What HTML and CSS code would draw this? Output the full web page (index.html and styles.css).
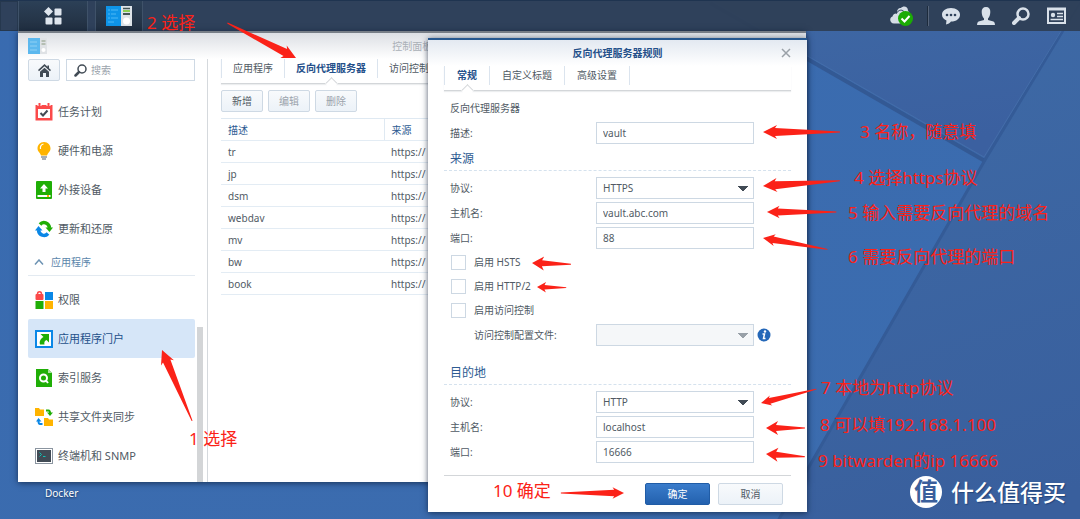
FILE: index.html
```html
<!DOCTYPE html>
<html lang="zh-CN">
<head>
  <meta charset="utf-8">
  <title>控制面板</title>
  <link rel="stylesheet" href="styles.css">
</head>
<body>
  <!-- 壁纸 -->
  <svg class="wallpaper" viewBox="0 0 1080 519" preserveAspectRatio="xMidYMid slice" aria-hidden="true">
    <defs>
      <linearGradient id="wall-left" x1="0" y1="0" x2="1" y2="1">
        <stop offset="0" stop-color="#396bb0"/>
        <stop offset="1" stop-color="#3c6cae"/>
      </linearGradient>
      <linearGradient id="wall-right" x1="0.5" y1="0" x2="0.7" y2="1">
        <stop offset="0" stop-color="#3e6aa6"/>
        <stop offset="1" stop-color="#395f9d"/>
      </linearGradient>
      <linearGradient id="wall-top" x1="0" y1="0" x2="0.3" y2="1">
        <stop offset="0" stop-color="#3e68a4"/>
        <stop offset="1" stop-color="#3b60a0"/>
      </linearGradient>
    </defs>
    <rect width="1080" height="519" fill="url(#wall-left)"/>
    <path d="M710 0H1082L985 158Z" fill="url(#wall-top)"/>
    <path d="M1082 0L985 158L806 470L778 519H1080V0Z" fill="url(#wall-right)"/>
    <path d="M710 3L985 161" stroke="#335994" stroke-width="4" fill="none"/>
    <path d="M1080 2L985 160L806 472L778 521" stroke="#345b97" stroke-width="3" fill="none"/>
    <path d="M710 0L984 157L1080 0" stroke="#446da9" stroke-width="1" fill="none"/>
  </svg>

  <!-- 任务栏 -->
  <header class="taskbar">
    <div class="task-slot"></div>
    <button class="task-btn task-menu" type="button" aria-label="主菜单">
      <svg width="18" height="18" viewBox="0 0 18 18" fill="#dfe6ee">
        <path d="M4.500 0L9 4.500L4.500 9L0 4.500Z"/>
        <rect x="10.500" y="1.500" width="7" height="7" rx="1"/>
        <rect x="1.500" y="10.500" width="7" height="7" rx="1"/>
        <rect x="10.500" y="10.500" width="7" height="7" rx="1"/>
      </svg>
    </button>
    <button class="task-btn task-app" type="button" aria-label="控制面板">
      <svg width="26" height="20" viewBox="0 0 26 20">
        <rect width="15" height="20" fill="#0e94e8"/>
        <rect x="15" width="11" height="20" fill="#dde3e8"/>
        <path d="M2 4h2M5 4h7M2 8h2M5 8h5M2 12h2M5 12h7M2 16h6" stroke="#4db8f5" stroke-width="1"/>
        <path d="M17 2.500h7" stroke="#455" stroke-width="1.500"/>
        <path d="M17 5h7" stroke="#6fc720" stroke-width="1.500"/>
        <path d="M17 8h7" stroke="#455" stroke-width="2"/>
        <circle cx="20.500" cy="15" r="3.500" fill="#fff"/>
      </svg>
    </button>
    <nav class="tray">
      <a href="#" aria-label="云同步">
        <svg width="24" height="20" viewBox="0 0 24 20">
          <path d="M4 17.500C-.5 17.500-1 11.500 2.500 10.500C3 8 5 7 7 7.500C7 4 11 3 12 5C14 3 17 4 17.500 8L20 17.500Z" fill="#d5dde6"/>
          <path d="M7 6.500C7 3 9 1.500 11 2C13-.5 18 0 18 4.500L20 8L15 7C13 4 10 4 7 6.500Z" fill="#d5dde6"/>
          <path d="M6.500 7.500C8 3.500 13 3 14.500 6.500" fill="none" stroke="#2f425b"/>
          <circle cx="15.500" cy="12.500" r="7.500" fill="#1bab05"/>
          <path d="M11.500 12.500L14.500 15.500L19.500 10" fill="none" stroke="#fff" stroke-width="2"/>
        </svg>
      </a>
      <span class="tray-divider"></span>
      <a href="#" aria-label="通知">
        <svg width="18" height="18" viewBox="0 0 18 18">
          <path d="M9 1C3.500 1 0 4 0 7.700C0 10.500 2 12.500 4.500 13.500L4 17.500C6 17 8 16 9 14.500C14.500 14.500 18 11.500 18 7.700C18 4 14.500 1 9 1Z" fill="#d9e1ea"/>
          <circle cx="5" cy="8" r="1.300" fill="#2f425b"/><circle cx="9" cy="8" r="1.300" fill="#2f425b"/><circle cx="13" cy="8" r="1.300" fill="#2f425b"/>
        </svg>
      </a>
      <a href="#" aria-label="用户">
        <svg width="18" height="18" viewBox="0 0 18 18" fill="#d9e1ea">
          <path d="M9 0C6 0 4.500 2 4.700 5C4.800 8 5.500 10 7 11.500V13L1.500 14.500Q0 15 0 18H18Q18 15 16.500 14.500L11 13V11.500C12.500 10 13.200 8 13.300 5C13.500 2 12 0 9 0Z"/>
        </svg>
      </a>
      <a href="#" aria-label="搜索">
        <svg width="18" height="18" viewBox="0 0 18 18" fill="none" stroke="#d9e1ea">
          <circle cx="11" cy="7" r="5.500" stroke-width="2.500"/>
          <path d="M7 11L2 16" stroke-width="4" stroke-linecap="round"/>
        </svg>
      </a>
      <a href="#" aria-label="小工具">
        <svg width="19" height="18" viewBox="0 0 19 18" fill="none" stroke="#d9e1ea">
          <path d="M1 2V16H18V2Z" stroke-width="2"/>
          <path d="M0 2H19" stroke-width="3"/>
          <circle cx="6" cy="8" r="2.200" fill="#d9e1ea" stroke="none"/>
          <path d="M10 6.500H16M10 9.500H16M3.500 12.500H16" stroke-width="1.500"/>
        </svg>
      </a>
    </nav>
  </header>

  <main class="desktop">
    <span class="desktop-label">Docker</span>

    <!-- 控制面板窗口 -->
    <section class="window panel">
      <div class="panel-title">
        <svg class="panel-icon" width="19" height="16" viewBox="0 0 19 16">
          <rect width="12" height="16" fill="#5cb8ee"/>
          <rect x="12" width="7" height="16" fill="#dfe2e5"/>
          <path d="M2 4h7M2 8h7M2 12h7" stroke="#8fd0f4"/>
          <path d="M13.500 3h4M13.500 6h4" stroke="#8a9a80"/>
          <circle cx="15.500" cy="12" r="2" fill="#fff"/>
        </svg>
        控制面板
      </div>
      <div class="panel-body">
        <aside class="sidebar">
          <div class="side-tools">
            <button class="btn btn-home" type="button" aria-label="首页">
              <svg width="13" height="13" viewBox="0 0 13 13" fill="#414b55">
                <path d="M6.500 0L0 6L1 7.200L6.500 2.300L12 7.200L13 6L11 4.200V1.500H9.500V2.800Z"/>
                <path d="M6.500 3.800L2 7.800V13H5V9H8V13H11V7.800Z"/>
              </svg>
            </button>
            <div class="search">
              <svg width="13" height="13" viewBox="0 0 13 13" fill="none" stroke="#414b55">
                <circle cx="8" cy="5" r="4" stroke-width="1.500"/>
                <path d="M5 8L1.500 11.500" stroke-width="2.500" stroke-linecap="round"/>
              </svg>
              <input type="text" placeholder="搜索" aria-label="搜索">
            </div>
          </div>
          <nav class="side-nav">
            <a href="#">
              <svg width="18" height="18" viewBox="0 0 18 18">
                <path d="M.5 2H17.500V17.500H.5Z" fill="#fb4a4a"/>
                <path d="M3 6H15V15H3Z" fill="#fff"/>
                <path d="M4.500 0V3M13.500 0V3" stroke="#fff" stroke-width="4"/>
                <path d="M4.500 0V3M13.500 0V3" stroke="#fb4a4a" stroke-width="2"/>
                <path d="M5.500 10L8 12.500L12.500 7.500" fill="none" stroke="#414b55" stroke-width="2"/>
              </svg>
              任务计划
            </a>
            <a href="#">
              <svg width="18" height="18" viewBox="0 0 18 18">
                <path d="M9 0C5 0 2.500 3 2.500 6.500C2.500 9.500 5 10.500 6 13.500H12C13 10.500 15.500 9.500 15.500 6.500C15.500 3 13 0 9 0Z" fill="#ffb400"/>
                <path d="M5.500 7C5 4 6.500 2.500 8.500 2" fill="none" stroke="#fff" stroke-width="1.200"/>
                <path d="M6 15H12M7 17H11" stroke="#8b95a0" stroke-width="1.500"/>
              </svg>
              硬件和电源
            </a>
            <a href="#">
              <svg width="18" height="18" viewBox="0 0 18 18">
                <rect x="1" width="16" height="18" rx="1" fill="#1fae06"/>
                <path d="M9 3L13 7.500H10.500V11H7.500V7.500H5Z" fill="#fff"/>
                <rect x="2.500" y="14" width="13" height="2" fill="#fff"/>
                <rect x="12" y="14" width="2" height="2" fill="#ffb400"/>
              </svg>
              外接设备
            </a>
            <a href="#">
              <svg width="18" height="18" viewBox="0 0 18 18">
                <path d="M5 4.500C8 1 14 2.500 14.500 8" fill="none" stroke="#1fae06" stroke-width="3.500"/>
                <path d="M10.500 7.500H18L14.500 12Z" fill="#1fae06"/>
                <path d="M13 13.500C10 17 4 15.500 3.500 10" fill="none" stroke="#0a87e6" stroke-width="3.500"/>
                <path d="M0 10.500H7.500L3.500 6Z" fill="#0a87e6"/>
              </svg>
              更新和还原
            </a>
            <h3 class="side-group">
              <svg width="10" height="6" viewBox="0 0 10 6" fill="none" stroke="#6d93b3" stroke-width="1.500"><path d="M1 5.500L5 1L9 5.500"/></svg>
              应用程序
            </h3>
            <a href="#">
              <svg width="18" height="18" viewBox="0 0 18 18">
                <path d="M2.500 4V3C2.500 0 6.500 0 6.500 3V4" fill="none" stroke="#fb4a4a" stroke-width="1.500"/>
                <rect x=".5" y="3" width="8" height="6" rx="1" fill="#fb4a4a"/>
                <rect x="10" y="1" width="8" height="8" fill="#0a87e6"/>
                <rect x=".5" y="10" width="8" height="8" fill="#1fae06"/>
                <rect x="10" y="10" width="8" height="8" fill="#ffb400"/>
              </svg>
              权限
            </a>
            <a href="#" class="selected">
              <svg width="18" height="18" viewBox="0 0 18 18">
                <rect x="1" y="1" width="16" height="16" fill="#fff" stroke="#0a87e6" stroke-width="2"/>
                <path d="M5.500 4H14V12.500L11.500 10C9.500 11 9 12 9.500 14.500H5C4 11 6 8.500 8.500 7Z" fill="#1fae06"/>
              </svg>
              应用程序门户
            </a>
            <a href="#">
              <svg width="18" height="18" viewBox="0 0 18 18">
                <path d="M1 0H13L17 4V18H1Z" fill="#1fae06"/>
                <path d="M13 0V4H17Z" fill="#a9e09f"/>
                <circle cx="8.500" cy="9" r="3.500" fill="none" stroke="#fff" stroke-width="2"/>
                <path d="M11 11.500L13 14" stroke="#fff" stroke-width="2"/>
              </svg>
              索引服务
            </a>
            <a href="#">
              <svg width="18" height="18" viewBox="0 0 18 18">
                <path d="M0 0H4L5 1.500H9V8H0ZM9 10H13L14 11.500H18V18H9Z" fill="#ffb400"/>
                <path d="M11 2.500H13.500Q15 2.500 15 5" fill="none" stroke="#1fae06" stroke-width="2"/>
                <path d="M12 4.500H18L15 8Z" fill="#1fae06"/>
                <path d="M7.500 16H5Q3.500 16 3.500 13" fill="none" stroke="#0a87e6" stroke-width="2"/>
                <path d="M1 13.500H6.500L3.500 10Z" fill="#0a87e6"/>
              </svg>
              共享文件夹同步
            </a>
            <a href="#">
              <svg width="18" height="18" viewBox="0 0 18 18">
                <rect x=".5" y="1.500" width="17" height="15" fill="#fff" stroke="#8b95a0"/>
                <rect x="2" y="3" width="14" height="12" fill="#414b55"/>
                <path d="M4.500 5.500L6.500 7.500L4.500 9.500M8 9.500H10.500" fill="none" stroke="#12c0b4"/>
              </svg>
              终端机和 SNMP
            </a>
          </nav>
          <div class="side-scroll"></div>
        </aside>

        <div class="content">
          <nav class="tabs">
            <a href="#">应用程序</a>
            <a href="#" class="active">反向代理服务器</a>
            <a href="#">访问控制</a>
          </nav>
          <div class="toolbar">
            <button class="btn" type="button">新增</button>
            <button class="btn" type="button" disabled>编辑</button>
            <button class="btn" type="button" disabled>删除</button>
          </div>
          <table class="rules">
            <thead>
              <tr><th>描述</th><th>来源</th></tr>
            </thead>
            <tbody>
              <tr><td>tr</td><td>https://</td></tr>
              <tr><td>jp</td><td>https://</td></tr>
              <tr><td>dsm</td><td>https://</td></tr>
              <tr><td>webdav</td><td>https://</td></tr>
              <tr><td>mv</td><td>https://</td></tr>
              <tr><td>bw</td><td>https://</td></tr>
              <tr><td>book</td><td>https://</td></tr>
            </tbody>
          </table>
        </div>
      </div>
    </section>

    <!-- 反向代理规则对话框 -->
    <form class="window dialog">
      <div class="dialog-title">
        <h2>反向代理服务器规则</h2>
        <button class="close" type="button" aria-label="关闭">
          <svg width="10" height="10" viewBox="0 0 10 10" stroke="#9aa1a8" stroke-width="1.500"><path d="M1 1L9 9M9 1L1 9"/></svg>
        </button>
      </div>
      <nav class="tabs">
        <a href="#" class="active">常规</a>
        <a href="#">自定义标题</a>
        <a href="#">高级设置</a>
      </nav>
      <div class="fields">
        <p class="caption">反向代理服务器</p>
        <div class="row">
          <label for="desc">描述:</label>
          <input id="desc" type="text" value="vault">
        </div>
        <h3>来源</h3>
        <div class="row">
          <label for="src-proto">协议:</label>
          <select id="src-proto"><option>HTTPS</option><option>HTTP</option></select>
        </div>
        <div class="row">
          <label for="src-host">主机名:</label>
          <input id="src-host" type="text" value="vault.abc.com">
        </div>
        <div class="row">
          <label for="src-port">端口:</label>
          <input id="src-port" type="text" value="88">
        </div>
        <div class="checks">
          <label><input type="checkbox" name="hsts">启用 HSTS</label>
          <label><input type="checkbox" name="http2">启用 HTTP/2</label>
          <label><input type="checkbox" name="access">启用访问控制</label>
        </div>
        <div class="row">
          <label for="profile" class="indent">访问控制配置文件:</label>
          <select id="profile" disabled><option></option></select>
          <svg class="info" width="14" height="14" viewBox="0 0 14 14">
            <circle cx="7" cy="7" r="6.500" fill="#2467b8"/>
            <circle cx="8" cy="3.500" r="1.200" fill="#fff"/>
            <path d="M5.500 6H7.500L6.500 10.500H8.500" fill="none" stroke="#fff" stroke-width="1.500"/>
          </svg>
        </div>
        <h3 class="spaced">目的地</h3>
        <div class="row">
          <label for="dst-proto">协议:</label>
          <select id="dst-proto"><option>HTTP</option><option>HTTPS</option></select>
        </div>
        <div class="row">
          <label for="dst-host">主机名:</label>
          <input id="dst-host" type="text" value="localhost">
        </div>
        <div class="row">
          <label for="dst-port">端口:</label>
          <input id="dst-port" type="text" value="16666">
        </div>
      </div>
      <footer class="dialog-footer">
        <button class="btn btn-primary" type="button">确定</button>
        <button class="btn" type="button">取消</button>
      </footer>
    </form>
  </main>

  <!-- 操作步骤标注 -->
  <svg class="notes" width="1080" height="519" viewBox="0 0 1080 519">
    <defs>
      <path id="arrow" d="M0 0L14 -7L12 -4L77 -.5V.5L12 4L14 7Z"/>
      <path id="arrow-short" d="M0 0L12 -7L10 -3L39 -.5V.5L10 3L12 7Z"/>
    </defs>
    <g class="arrows">
      <use href="#arrow" transform="translate(162 350) rotate(67)"/>
      <use href="#arrow" transform="translate(296 58) rotate(207)"/>
      <use href="#arrow" transform="translate(763 132)"/>
      <use href="#arrow" transform="translate(763 186) rotate(-4)"/>
      <use href="#arrow" transform="translate(767 212) scale(.9)"/>
      <use href="#arrow" transform="translate(763 238) rotate(10) scale(.85)"/>
      <use href="#arrow-short" transform="translate(532 263) rotate(2)"/>
      <use href="#arrow-short" transform="translate(537 287) rotate(1) scale(.75)"/>
      <use href="#arrow" transform="translate(761 403) rotate(-14) scale(.74)"/>
      <use href="#arrow-short" transform="translate(766 428)"/>
      <use href="#arrow-short" transform="translate(766 454) rotate(4)"/>
      <use href="#arrow" transform="translate(624 493) rotate(180) scale(.82)"/>
    </g>
    <g class="steps">
      <text x="189" y="445">1 选择</text>
      <text x="147" y="29">2 选择</text>
      <text x="860" y="138">3 名称，随意填</text>
      <text x="854" y="184">4 选择https协议</text>
      <text x="848" y="219">5 输入需要反向代理的域名</text>
      <text x="848" y="263">6 需要反向代理的端口</text>
      <text x="821" y="394">7 本地为http协议</text>
      <text x="820" y="431">8 可以填192.168.1.100</text>
      <text x="818" y="467">9 bitwarden的ip 16666</text>
      <text x="493" y="497">10 确定</text>
    </g>
    <g class="brand">
      <circle cx="926" cy="492" r="16"/>
      <text class="brand-mark" x="926" y="500">值</text>
      <text class="brand-name" x="951" y="501">什么值得买</text>
    </g>
  </svg>
</body>
</html>
```

FILE: styles.css
```css
* {
  box-sizing: border-box;
}
body {
  margin: 0;
  min-height: 100vh;
  position: relative;
  overflow: hidden;
  display: flex;
  flex-direction: column;
  background-color: #3b6bae;
  color: #505a64;
  font-family: "Noto Sans", "Noto Sans CJK SC", sans-serif;
  font-size: 10px;
  line-height: 16px;
}
a {
  color: inherit;
  text-decoration: none;
}
h2, h3, p {
  margin: 0;
}
button, input, select {
  font: inherit;
  color: inherit;
}
svg {
  display: block;
  flex-shrink: 0;
}
.wallpaper {
  position: absolute;
  width: 100%;
  height: 100%;
}

/* 任务栏 */
.taskbar {
  position: relative;
  display: flex;
  height: 31px;
  background: rgba(46, 63, 86, 0.95);
  border-top: 1px solid #1f3450;
}
.task-slot {
  width: 18px;
  border: 1px solid #26384e;
}
.task-btn {
  display: flex;
  align-items: center;
  justify-content: center;
  padding: 0;
  border: 1px solid #3f5269;
  border-width: 0 1px;
  background: linear-gradient(#2c4057, #212f40);
}
.task-menu {
  width: 70px;
}
.task-app {
  width: 48px;
  margin-left: 7px;
}
.tray {
  display: flex;
  align-items: center;
  gap: 17px;
  margin-left: auto;
  padding-right: 14px;
}
.tray-divider {
  width: 2px;
  height: 20px;
  margin: 0 -4px;
  border-left: 1px solid #1d2b3c;
  border-right: 1px solid #566479;
}

/* 桌面 */
.desktop {
  position: relative;
  flex: 1;
}
.desktop-label {
  position: absolute;
  left: 45px;
  top: 454px;
  color: #fff;
  text-shadow: 0 1px 2px #14305a;
}
.window {
  position: absolute;
  background: #fff;
}

/* 控制面板 */
.panel {
  left: 18px;
  top: 0;
  width: 73%;
  border-top: 2px solid #777e87;
  box-shadow: 0 1px 6px rgba(10, 25, 50, 0.7);
}
.panel-title {
  position: relative;
  height: 26px;
  line-height: 26px;
  text-align: center;
  color: #aab0b7;
  background: linear-gradient(#dcdfe4, #fff);
}
.panel-icon {
  position: absolute;
  left: 10px;
  top: 5px;
}
.panel-body {
  display: flex;
}
.sidebar {
  position: relative;
  width: 190px;
  padding: 0 12px 7px 10px;
  border-right: 1px solid #d5d9dd;
}
.side-tools {
  display: flex;
  gap: 6px;
  margin-bottom: 11px;
}
.btn {
  display: flex;
  align-items: center;
  justify-content: center;
  height: 22px;
  padding: 0 10px;
  border: 1px solid #ced9e4;
  border-radius: 2px;
  background: linear-gradient(#f8fafc, #ecf2f8);
}
.btn:disabled {
  color: #9ba3ac;
}
.btn-home {
  width: 32px;
  padding: 0;
}
.search {
  flex: 1;
  display: flex;
  align-items: center;
  gap: 4px;
  height: 22px;
  padding-left: 7px;
  border: 1px solid #ced9e4;
}
.search input {
  width: 80px;
  border: 0;
  padding: 0;
  outline: 0;
}
.search input::placeholder {
  color: #9ba3ac;
}
.side-nav a {
  display: flex;
  align-items: center;
  gap: 5px;
  height: 39px;
  padding-left: 7px;
  font-size: 11px;
  border-radius: 2px;
}
.side-nav a.selected {
  background: #d6e6f8;
  color: #24508a;
}
.side-group {
  display: flex;
  align-items: center;
  gap: 7px;
  height: 28px;
  margin-bottom: 4px;
  padding-left: 6px;
  border-bottom: 1px solid #e3eaf1;
  font-size: 10px;
  font-weight: normal;
  color: #5a86ab;
}
.side-scroll {
  position: absolute;
  right: 4px;
  bottom: 0;
  width: 6px;
  height: 155px;
  background: #d3d5d7;
}
.content {
  flex: 1;
  padding-left: 13px;
}

/* 标签页 */
.tabs {
  display: flex;
  padding-bottom: 5px;
  border-bottom: 1px solid #d3d6d9;
  box-shadow: 0 1px 1px #eceeef;
}
.tabs a {
  position: relative;
  height: 19px;
  line-height: 19px;
  padding: 0 11px;
  border-left: 1px solid #dbe4ee;
}
.tabs a:last-child {
  border-right: 1px solid #dbe4ee;
}
.tabs a.active {
  font-weight: bold;
  color: #24508a;
}
.tabs a.active::after {
  content: "";
  position: absolute;
  left: 50%;
  bottom: -10px;
  width: 7px;
  height: 7px;
  margin-left: -4px;
  background: #fff;
  border: 1px solid #d3d6d9;
  border-right-color: transparent;
  border-bottom-color: transparent;
  transform: rotate(45deg);
}
.toolbar {
  display: flex;
  gap: 5px;
  padding: 6px 0;
}
.toolbar .btn {
  width: 42px;
}
.rules {
  width: 100%;
  border-collapse: collapse;
  border-top: 1px solid #dfe9f2;
  table-layout: fixed;
}
.rules th, .rules td {
  height: 22px;
  padding: 0 7px;
  border-bottom: 1px solid #e3ecf4;
  font-weight: normal;
  text-align: left;
}
.rules th {
  color: #2d5b92;
}
.rules th:first-child {
  width: 163px;
}
.rules th + th {
  border-left: 1px solid #dfe9f2;
}

/* 对话框 */
.dialog {
  left: 428px;
  top: 7px;
  width: 379px;
  padding: 0 16px;
  border-top: 2px solid #27588f;
  background: linear-gradient(#e3e9f1, #fff 26px);
  box-shadow: 0 1px 6px rgba(10, 25, 50, 0.7);
}
.dialog-title {
  display: flex;
  align-items: center;
  height: 26px;
}
.dialog-title h2 {
  flex: 1;
  padding-left: 10px;
  text-align: center;
  font-size: 10px;
  color: #24508a;
}
.close {
  padding: 0;
  border: 0;
  background: none;
}
.dialog .tabs a {
  padding: 0 12px;
}
.fields {
  padding-top: 8px;
}
.caption {
  padding: 1px 6px 6px;
}
.row {
  display: grid;
  grid-template-columns: 146px 158px 14px;
  align-items: center;
  margin-bottom: 3px;
  padding-left: 6px;
}
.row .indent {
  padding-left: 24px;
}
.row input, .row select {
  width: 100%;
  height: 22px;
  padding: 0 6px;
  border: 1px solid #cdd8e3;
  border-radius: 0;
  outline: 0;
  background-color: #fff;
}
.row select {
  appearance: none;
  background-image: linear-gradient(to bottom left, #414b55 50%, transparent 51%), linear-gradient(to bottom right, #414b55 50%, transparent 51%);
  background-size: 5px 5px;
  background-repeat: no-repeat;
  background-position: right 10px center, right 5px center;
}
.row select:disabled {
  opacity: 1;
  background-color: #f5f7f9;
  background-image: linear-gradient(to bottom left, #98a0a8 50%, transparent 51%), linear-gradient(to bottom right, #98a0a8 50%, transparent 51%);
}
.row .info {
  margin-left: 3px;
}
.fields h3 {
  height: 24px;
  line-height: 24px;
  margin-bottom: 6px;
  padding-left: 6px;
  border-bottom: 1px dashed #d5e2ee;
  font-size: 12px;
  font-weight: normal;
  color: #2d5b92;
}
.fields h3.spaced {
  margin-top: 15px;
}
.checks {
  display: grid;
  gap: 8px;
  padding: 2px 0 6px 7px;
}
.checks label {
  display: flex;
  align-items: center;
  gap: 8px;
}
.checks input {
  appearance: none;
  width: 15px;
  height: 15px;
  margin: 0;
  border: 1px solid #cdd8e3;
  background: #fff;
}
.dialog-footer {
  display: flex;
  justify-content: flex-end;
  gap: 8px;
  margin-top: 12px;
  padding: 7px 8px;
  border-top: 1px solid #d3d6d9;
}
.dialog-footer .btn {
  width: 65px;
}
.dialog-footer .btn-primary {
  border-color: #205ca6;
  background: linear-gradient(#3a7ccb, #2361ae);
  color: #fff;
}

/* 标注 */
.notes {
  position: absolute;
  left: 0;
  top: 0;
  pointer-events: none;
}
.arrows, .steps {
  fill: #fb2218;
}
.steps {
  font-size: 17px;
}
.brand {
  fill: #fff;
}
.brand-mark {
  font-size: 24px;
  font-weight: bold;
  text-anchor: middle;
  fill: #3a5f9c;
}
.brand-name {
  font-size: 23px;
  font-weight: 500;
  text-shadow: 1px 1px 1px #23457c;
}
```
